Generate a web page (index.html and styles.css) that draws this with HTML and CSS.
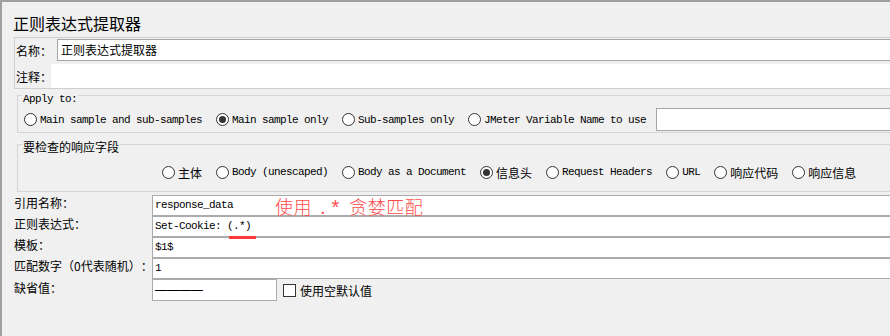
FILE: index.html
```html
<!DOCTYPE html>
<html lang="zh-CN">
<head>
    <meta charset="UTF-8">
    <title>正则表达式提取器</title>
    <link rel="stylesheet" href="styles.css">
</head>
<body>

<div class="editor">
    <div class="title">正则表达式提取器</div>

    <!-- name / comment -->
    <div class="name-panel">
        <div class="name-row">
            <span class="name-label">名称：</span>
            <div class="name-input">正则表达式提取器</div>
        </div>
        <div class="comment-row">
            <span class="comment-label">注释：</span>
            <div class="comment-input"></div>
        </div>
    </div>

    <!-- Apply to -->
    <div class="group apply-group">
        <div class="group-title mono">Apply to:</div>
        <div class="radio-row apply-row">
            <label class="radio"><span class="dot"></span><span class="mono">Main sample and sub-samples</span></label>
            <label class="radio"><span class="dot on"></span><span class="mono">Main sample only</span></label>
            <label class="radio"><span class="dot"></span><span class="mono">Sub-samples only</span></label>
            <label class="radio last"><span class="dot"></span><span class="mono">JMeter Variable Name to use</span></label>
            <div class="var-input"></div>
        </div>
    </div>

    <!-- response field -->
    <div class="group field-group">
        <div class="group-title cjk-title">要检查的响应字段</div>
        <div class="radio-row field-row">
            <label class="radio"><span class="dot"></span><span>主体</span></label>
            <label class="radio"><span class="dot"></span><span class="mono">Body (unescaped)</span></label>
            <label class="radio"><span class="dot"></span><span class="mono">Body as a Document</span></label>
            <label class="radio"><span class="dot on"></span><span>信息头</span></label>
            <label class="radio"><span class="dot"></span><span class="mono">Request Headers</span></label>
            <label class="radio"><span class="dot"></span><span class="mono">URL</span></label>
            <label class="radio"><span class="dot"></span><span>响应代码</span></label>
            <label class="radio"><span class="dot"></span><span>响应信息</span></label>
        </div>
    </div>

    <!-- extractor fields -->
    <div class="form">
        <div class="form-row">
            <span class="form-label">引用名称：</span>
            <div class="field">response_data</div>
        </div>
        <div class="form-row">
            <span class="form-label">正则表达式：</span>
            <div class="field">Set-Cookie: (.*)</div>
        </div>
        <div class="form-row">
            <span class="form-label">模板：</span>
            <div class="field">$1$</div>
        </div>
        <div class="form-row">
            <span class="form-label">匹配数字（0代表随机）：</span>
            <div class="field">1</div>
        </div>
        <div class="form-row default-row">
            <span class="form-label">缺省值：</span>
            <div class="field short"><span class="dash">————</span></div>
            <label class="check"><span class="box"></span><span>使用空默认值</span></label>
        </div>
    </div>

    <div class="note">使用<span class="note-code">.*</span>贪婪匹配</div>
    <div class="mark"></div>
</div>

</body>
</html>
```

FILE: styles.css
```css
body {
    margin: 0;
    background-color: #f0f0f0;
    font-family: "Noto Sans CJK SC", "Liberation Sans", sans-serif;
    font-size: 12px;
    color: #000;
    overflow: hidden;
    text-spacing-trim: space-all;
}

.mono {
    font-family: "Liberation Mono", monospace;
    font-size: 11px;
    letter-spacing: -0.6px;
}

.editor {
    position: relative;
    width: 1100px;
    height: 336px;
    box-sizing: border-box;
    border-top: 2px solid #a0a0a0;
    border-left: 2px solid #a0a0a0;
    padding: 9px 0 0 11px;
}

.title {
    font-size: 16px;
    line-height: 24px;
    margin-bottom: 2px;
}

/* name panel */
.name-panel {
    border: 1px solid #cfcfcf;
    border-right: none;
    margin-left: 1px;
    padding: 1px 0 0 1px;
}

.name-row, .comment-row {
    display: flex;
    align-items: center;
}

.name-row {
    height: 22px;
}

.comment-row {
    height: 24px;
    margin-top: 3px;
}

.name-label, .comment-label {
    flex: none;
    white-space: nowrap;
}

.name-label {
    width: 41px;
}

.comment-label {
    width: 35px;
}

.name-input {
    flex: 1;
    height: 22px;
    box-sizing: border-box;
    border: 1px solid #a5a5a5;
    background-color: #fff;
    padding-left: 3px;
    line-height: 20px;
}

.comment-input {
    flex: 1;
    height: 24px;
    background-color: #fff;
}

/* group boxes */
.group {
    border: 1px solid #d5d5d5;
    border-right: none;
    margin-left: 4px;
    padding-left: 4px;
}

.apply-group {
    margin-top: 6px;
    padding-bottom: 1px;
}

.field-group {
    margin-top: 11px;
    padding-bottom: 10px;
}

.group-title {
    display: table;
    background-color: #f0f0f0;
    padding: 0 1px;
    line-height: 12px;
    margin-top: -3px;
}

.group-title.cjk-title {
    line-height: 16px;
    margin-top: -6px;
}

.radio-row {
    display: flex;
    align-items: center;
}

.apply-row {
    height: 23px;
    margin-top: 3px;
    padding-left: 2px;
}

.field-row {
    height: 18px;
    margin-top: 8px;
    padding-left: 140px;
}

.radio {
    display: flex;
    align-items: center;
    margin-right: 14px;
    white-space: nowrap;
}

.apply-row .radio.last {
    margin-right: 10px;
}

.dot {
    position: relative;
    width: 13px;
    height: 13px;
    box-sizing: border-box;
    border: 1px solid #333;
    border-radius: 50%;
    background-color: #fff;
    margin-right: 3px;
}

.dot.on::after {
    content: "";
    position: absolute;
    left: 2px;
    top: 2px;
    width: 7px;
    height: 7px;
    border-radius: 50%;
    background-color: #333;
}

.var-input {
    flex: 1;
    height: 23px;
    box-sizing: border-box;
    border: 1px solid #a5a5a5;
    background-color: #fff;
}

/* form rows */
.form {
    margin-top: 3px;
    padding-left: 1px;
}

.form-row {
    display: flex;
}

.form-label {
    flex: none;
    width: 138px;
    line-height: 16px;
    white-space: nowrap;
}

.field {
    flex: 1;
    height: 21px;
    box-sizing: border-box;
    border: 1px solid #ababab;
    background-color: #fff;
    padding-left: 2px;
    line-height: 19px;
    font-family: "Liberation Mono", monospace;
    font-size: 11px;
    letter-spacing: -0.6px;
}

.default-row {
    align-items: center;
}

.default-row .form-label {
    align-self: flex-start;
    padding-top: 1px;
}

.field.short {
    flex: none;
    width: 125px;
    height: 22px;
    line-height: 20px;
}

.dash {
    font-family: "Liberation Sans", sans-serif;
    font-size: 12px;
    letter-spacing: 0;
}

.check {
    display: flex;
    align-items: center;
    margin-left: 6px;
}

.box {
    width: 13px;
    height: 13px;
    box-sizing: border-box;
    border: 1px solid #333;
    background-color: #fff;
    margin-right: 4px;
}

/* red annotation */
.note {
    position: absolute;
    left: 273px;
    top: 192px;
    color: #ff4a4a;
    font-size: 18px;
    line-height: 24px;
    font-weight: 300;
    letter-spacing: 0.5px;
    white-space: nowrap;
}

.note-code {
    font-family: "Liberation Sans", sans-serif;
    font-size: 20px;
    letter-spacing: 6px;
    margin: 0 4px 0 8px;
}

.mark {
    position: absolute;
    left: 227px;
    top: 234px;
    width: 27px;
    height: 3px;
    background-color: #ff3838;
}
```
